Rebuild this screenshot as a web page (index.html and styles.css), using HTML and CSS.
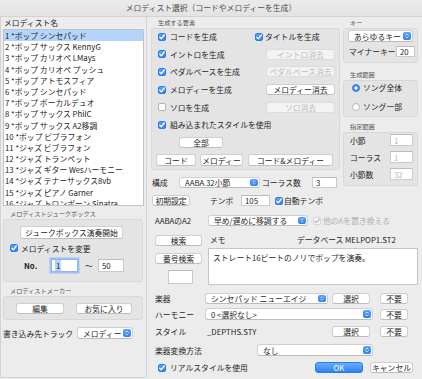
FILE: index.html
```html
<!DOCTYPE html>
<html lang="ja">
<head>
<meta charset="utf-8">
<title>メロディスト選択</title>
<link rel="stylesheet" href="styles.css">
</head>
<body>
<div class="win">
  <div class="title">メロディスト選択（コードやメロディーを生成）</div>
  <div class="main">
    <div class="left">
      <div class="lbl-name">メロディスト名</div>
      <div class="list">
        <div class="li cur">1 *ポップ シンセパッド</div>
        <div class="li">2 *ポップ サックス KennyG</div>
        <div class="li">3 *ポップ カリオペ LMays</div>
        <div class="li">4 *ポップ カリオペ プッシュ</div>
        <div class="li">5 *ポップ アトモスフィア</div>
        <div class="li">6 *ポップ シンセパッド</div>
        <div class="li">7 *ポップ ボーカルデュオ</div>
        <div class="li">8 *ポップ サックス PhilC</div>
        <div class="li">9 *ポップ サックス A2移調</div>
        <div class="li">10 *ポップ ビブラフォン</div>
        <div class="li">11 *ジャズ ビブラフォン</div>
        <div class="li">12 *ジャズ トランペット</div>
        <div class="li">13 *ジャズ ギター Wesハーモニー</div>
        <div class="li">14 *ジャズ テナーサックス8vb</div>
        <div class="li">15 *ジャズ ピアノ Garner</div>
        <div class="li">16 *ジャズ トロンボーン Sinatra</div>
      </div>
      <div class="glabel gl-juke">メロディストジュークボックス</div>
      <div class="grp g-juke">
        <div class="btn b-juke">ジュークボックス演奏開始</div>
        <div class="row r-chg">
          <span class="cb on"><svg viewBox="0 0 8 8"><path d="M1.8 4.2 L3.3 5.9 L6.3 2"/></svg></span>
          <span class="t-chg">メロディストを変更</span>
        </div>
        <div class="row r-no">
          <span class="w-no">No.</span>
          <span class="inp i-no"><span class="hl">1</span></span>
          <span class="tilde">〜</span>
          <span class="inp i-50">50</span>
        </div>
      </div>
      <div class="glabel gl-maker">メロディストメーカー</div>
      <div class="grp g-maker">
        <div class="row r-maker">
          <div class="btn b-edit">編集</div>
          <div class="btn b-fav">お気に入り</div>
        </div>
      </div>
      <div class="row r-track">
        <span class="w-track">書き込み先トラック</span>
        <div class="sel s-track"><span>メロディー</span><i class="step"><svg viewBox="0 0 8 11"><path d="M2.3 4.3 L4 2.6 L5.7 4.3 M2.3 6.7 L4 8.4 L5.7 6.7"/></svg></i></div>
      </div>
    </div>

    <div class="rp">
      <div class="upper">
        <div class="center">
          <div class="glabel gl-top">生成する要素</div>
          <div class="grp g-gen">
            <div class="gen-rows">
              <div class="row r-gen">
                <div class="c1"><span class="cb on"><svg viewBox="0 0 8 8"><path d="M1.8 4.2 L3.3 5.9 L6.3 2"/></svg></span><span class="t-gen">コードを生成</span></div>
                <span class="cb on"><svg viewBox="0 0 8 8"><path d="M1.8 4.2 L3.3 5.9 L6.3 2"/></svg></span><span class="t-title">タイトルを生成</span>
              </div>
              <div class="row r-gen">
                <div class="c1"><span class="cb on"><svg viewBox="0 0 8 8"><path d="M1.8 4.2 L3.3 5.9 L6.3 2"/></svg></span><span class="t-gen">イントロを生成</span></div>
                <div class="btn b-clr dis">イントロ消去</div>
              </div>
              <div class="row r-gen">
                <div class="c1"><span class="cb on"><svg viewBox="0 0 8 8"><path d="M1.8 4.2 L3.3 5.9 L6.3 2"/></svg></span><span class="t-gen">ペダルベースを生成</span></div>
                <div class="btn b-clr dis">ペダルベース消去</div>
              </div>
              <div class="row r-gen">
                <div class="c1"><span class="cb on"><svg viewBox="0 0 8 8"><path d="M1.8 4.2 L3.3 5.9 L6.3 2"/></svg></span><span class="t-gen">メロディーを生成</span></div>
                <div class="btn b-clr">メロディー消去</div>
              </div>
              <div class="row r-gen">
                <div class="c1"><span class="cb"></span><span class="t-gen">ソロを生成</span></div>
                <div class="btn b-clr dis">ソロ消去</div>
              </div>
              <div class="row r-gen">
                <div class="c1 wide"><span class="cb on"><svg viewBox="0 0 8 8"><path d="M1.8 4.2 L3.3 5.9 L6.3 2"/></svg></span><span class="t-gen">組み込まれたスタイルを使用</span></div>
              </div>
            </div>
            <div class="btn b-all">全部</div>
            <div class="row r-three">
              <div class="btn b-code">コード</div>
              <div class="btn b-mel">メロディー</div>
              <div class="btn b-cm">コード&amp;メロディー</div>
            </div>
          </div>
          <div class="row r-kousei">
            <span class="w-kousei">構成</span>
            <div class="sel s-kousei"><span>AABA 32小節</span><i class="step"><svg viewBox="0 0 8 11"><path d="M2.3 4.3 L4 2.6 L5.7 4.3 M2.3 6.7 L4 8.4 L5.7 6.7"/></svg></i></div>
            <span class="w-chorus">コーラス数</span>
            <span class="inp i-chorus">3</span>
          </div>
          <div class="row r-init">
            <div class="btn b-init">初期設定</div>
            <span class="w-tempo">テンポ</span>
            <span class="inp i-tempo">105</span>
            <span class="cb on cb-auto"><svg viewBox="0 0 8 8"><path d="M1.8 4.2 L3.3 5.9 L6.3 2"/></svg></span>
            <span class="t-auto">自動テンポ</span>
          </div>
        </div>

        <div class="rcol">
          <div class="glabel gl-top">キー</div>
          <div class="grp g-key">
            <div class="sel s-key"><span>あらゆるキー</span><i class="step"><svg viewBox="0 0 8 11"><path d="M2.3 4.3 L4 2.6 L5.7 4.3 M2.3 6.7 L4 8.4 L5.7 6.7"/></svg></i></div>
            <div class="row r-minor"><span class="w-minor">マイナーキー</span><span class="inp i-minor">20</span></div>
          </div>
          <div class="glabel gl-range">生成範囲</div>
          <div class="grp g-range">
            <div class="row r-rad r-rad1"><span class="rad on"></span><span class="t-rad">ソング全体</span></div>
            <div class="row r-rad r-rad2"><span class="rad"></span><span class="t-rad">ソング一部</span></div>
          </div>
          <div class="glabel gl-spec">指定範囲</div>
          <div class="grp g-spec">
            <div class="row r-spec"><span class="w-spec">小節</span><span class="inp i-spec">1</span></div>
            <div class="row r-spec"><span class="w-spec">コーラス</span><span class="inp i-spec">1</span></div>
            <div class="row r-spec"><span class="w-spec">小節数</span><span class="inp i-spec">32</span></div>
          </div>
        </div>
      </div>

      <div class="row r-aaba">
        <span class="w-aaba">AABAのA2</span>
        <div class="sel s-aaba"><span>早め/遅めに移調する</span><i class="step"><svg viewBox="0 0 8 11"><path d="M2.3 4.3 L4 2.6 L5.7 4.3 M2.3 6.7 L4 8.4 L5.7 6.7"/></svg></i></div>
        <span class="cb dis-on"><svg viewBox="0 0 8 8"><path d="M1.8 4.2 L3.3 5.9 L6.3 2"/></svg></span>
        <span class="t-other">他のAを置き換える</span>
      </div>

      <div class="lower">
        <div class="lc">
          <div class="btn b-search">検索</div>
          <div class="btn b-num">番号検索</div>
          <span class="inp i-num"></span>
        </div>
        <div class="rc">
          <div class="row r-memo">
            <span class="w-memo">メモ</span>
            <span class="w-db">データベース</span>
            <span class="v-db">MELPOP1.ST2</span>
          </div>
          <div class="memo">ストレート16ビートのノリでポップを演奏。</div>
        </div>
      </div>

      <div class="row r-inst">
        <span class="w-lbl">楽器</span>
        <div class="sel s-inst"><span>シンセパッド ニューエイジ</span><i class="step"><svg viewBox="0 0 8 11"><path d="M2.3 4.3 L4 2.6 L5.7 4.3 M2.3 6.7 L4 8.4 L5.7 6.7"/></svg></i></div>
        <div class="btn b-pick">選択</div>
        <div class="btn b-none">不要</div>
      </div>
      <div class="row r-harm">
        <span class="w-lbl">ハーモニー</span>
        <div class="sel s-harm"><span>0 &lt;選択なし&gt;</span><i class="step"><svg viewBox="0 0 8 11"><path d="M2.3 4.3 L4 2.6 L5.7 4.3 M2.3 6.7 L4 8.4 L5.7 6.7"/></svg></i></div>
        <div class="btn b-none2">不要</div>
      </div>
      <div class="row r-style">
        <span class="w-lbl">スタイル</span>
        <span class="v-style">_DEPTHS.STY</span>
        <div class="btn b-pick b-pick2">選択</div>
        <div class="btn b-none">不要</div>
      </div>
      <div class="row r-conv">
        <span class="w-conv">楽器変換方法</span>
        <div class="sel s-conv"><span>なし</span><i class="step"><svg viewBox="0 0 8 11"><path d="M2.3 4.3 L4 2.6 L5.7 4.3 M2.3 6.7 L4 8.4 L5.7 6.7"/></svg></i></div>
      </div>
      <div class="row r-bottom">
        <span class="cb on cb-real"><svg viewBox="0 0 8 8"><path d="M1.8 4.2 L3.3 5.9 L6.3 2"/></svg></span>
        <span class="t-real">リアルスタイルを使用</span>
        <div class="btn b-ok">OK</div>
        <div class="btn b-cancel">キャンセル</div>
      </div>
    </div>
  </div>
</div>
</body>
</html>
```

FILE: styles.css
```css
* { box-sizing: border-box; }
html, body { margin: 0; padding: 0; }
body {
  font-family: "Noto Sans CJK JP", "Noto Sans", sans-serif;
  font-size: 7.8px;
  color: #1d1d1d;
  background: #ececec;
}
.win {
  width: 422px;
  height: 379px;
  overflow: hidden;
  background: #ececec;
  white-space: nowrap;
}
.title {
  height: 17px;
  line-height: 16px;
  text-align: center;
  color: #4c4c4c;
  background: linear-gradient(#ebebeb, #e3e3e3);
  border-bottom: 1px solid #d2d2d2;
}
.main { display: flex; height: 362px; }

/* generic pieces */
.row { display: flex; align-items: center; }
.glabel {
  height: 10px;
  line-height: 10px;
  font-size: 6.2px;
  color: #555;
}
.grp {
  background: #e4e4e4;
  border: 1px solid #d8d8d8;
  border-radius: 3px;
}
.btn {
  display: flex;
  align-items: center;
  justify-content: center;
  height: 11px;
  background: #fff;
  border: 1px solid #cfcfcf;
  border-bottom-color: #bdbdbd;
  border-radius: 3px;
  color: #222;
  flex: none;
}
.btn.dis { background: #f3f3f3; color: #bcbcbc; border-color: #dcdcdc; }
.cb {
  flex: none;
  width: 8px;
  height: 8px;
  border-radius: 2px;
  background: #fff;
  border: 1px solid #b4b4b4;
  display: flex;
}
.cb svg { width: 8px; height: 8px; margin: -1px; }
.cb path { fill: none; stroke: #fff; stroke-width: 1.3; stroke-linecap: round; stroke-linejoin: round; }
.cb.on { background: linear-gradient(#5aa2fb, #2f80f2); border-color: #2f7be8; }
.cb.dis-on { background: #fff; border-color: #d6d6d6; }
.cb.dis-on path { stroke: #b8b8b8; }
.rad {
  flex: none;
  width: 8px;
  height: 8px;
  border-radius: 50%;
  background: #fff;
  border: 1px solid #b4b4b4;
}
.rad.on {
  background: radial-gradient(circle, #fff 0 1.4px, #3d88f5 1.8px);
  border-color: #2f7be8;
}
.inp {
  flex: none;
  display: flex;
  align-items: center;
  background: #fff;
  border: 1px solid #cacaca;
  border-top-color: #bcbcbc;
  padding-left: 3px;
  color: #1d1d1d;
}
.sel {
  flex: none;
  display: flex;
  align-items: center;
  position: relative;
  background: #fff;
  border: 1px solid #d0d0d0;
  border-bottom-color: #bcbcbc;
  border-radius: 3px;
  padding-left: 5px;
}
.sel > span { flex: 1; overflow: hidden; }
.step {
  flex: none;
  width: 8px;
  height: calc(100% - 2px);
  margin-right: 1px;
  border-radius: 2px;
  background: linear-gradient(#5aa2fb, #2f80f2);
  display: flex;
}
.step svg { width: 8px; height: 100%; }
.step path { fill: none; stroke: #fff; stroke-width: 1; stroke-linecap: round; stroke-linejoin: round; }

/* left panel */
.left {
  flex: none;
  width: 147px;
  height: 361px;
  border: 1px solid #d3d3d3;
  border-top: none;
  padding: 0 2px;
}
.lbl-name { height: 12px; line-height: 11px; padding-left: 1px; }
.list {
  height: 177px;
  background: #fff;
  border: 1px solid #c3c3c3;
  overflow: hidden;
}
.li { height: 11.2px; line-height: 11.2px; padding-left: 1px; }
.li.cur { background: #b5d4fc; }
.gl-juke { margin-top: 3px; padding-left: 7px; }
.g-juke { height: 63px; width: 140px; }
.b-juke { margin: 6px 0 0 16px; width: 103px; height: 13px; }
.r-chg { height: 12px; margin-top: 3px; }
.r-chg .cb { margin-left: 6px; }
.t-chg { margin-left: 3px; }
.r-no { height: 13px; margin-top: 5px; }
.w-no { margin-left: 20px; width: 27px; font-weight: bold; }
.i-no { width: 27px; height: 13px; border-color: #8fb7ef; box-shadow: 0 0 0 1.5px #9cc1f4; }
.hl { background: #b5d4fc; padding: 0 1px; }
.tilde { margin-left: 7px; width: 13px; }
.i-50 { width: 26px; height: 13px; }
.gl-maker { margin-top: 4px; padding-left: 7px; }
.g-maker { height: 24px; width: 140px; }
.r-maker { margin-top: 6px; }
.b-edit { margin-left: 12px; width: 48px; }
.b-fav { margin-left: 12px; width: 56px; }
.r-track { margin-top: 7px; height: 12px; }
.w-track { width: 74px; }
.s-track { width: 56px; height: 12px; }

/* right part */
.rp { flex: none; width: 275px; }
.upper { display: flex; height: 189px; }
.center { flex: none; width: 189px; margin-left: 4px; }
.gl-top { margin-top: 1px; padding-left: 7px; }
.g-gen { height: 142px; }
.gen-rows { margin-top: -1px; }
.r-gen { height: 17.6px; }
.c1 { width: 103px; display: flex; align-items: center; }
.c1 .cb { margin-left: 6px; }
.t-gen { margin-left: 4px; }
.t-title { margin-left: 2px; }
.b-clr { margin-left: 11px; width: 69px; }
.b-all { margin: 3.5px 0 0 27px; width: 44px; }
.r-three { margin-top: 6px; }
.r-three .btn { height: 12px; }
.b-code { margin-left: 4px; width: 40px; }
.b-mel { margin-left: 4px; width: 43px; }
.b-cm { margin-left: 5px; width: 85px; }
.r-kousei { margin-top: 7px; height: 11px; }
.w-kousei { width: 28px; padding-left: 1px; }
.s-kousei { width: 81px; height: 11px; }
.w-chorus { width: 52px; padding-left: 2px; }
.i-chorus { width: 25px; height: 11px; }
.r-init { margin-top: 7px; height: 11px; }
.b-init { margin-left: 1px; width: 38px; }
.w-tempo { margin-left: 20px; width: 31px; }
.i-tempo { width: 29px; height: 11px; }
.cb-auto { margin-left: 5px; }
.t-auto { margin-left: 1px; }

.rcol { flex: none; width: 75px; margin-left: 3px; }
.g-key { height: 35px; }
.s-key { margin: 1px 0 0 4px; width: 65px; height: 12px; }
.r-minor { margin-top: 4px; height: 11px; }
.w-minor { margin-left: 5px; width: 47px; }
.i-minor { width: 19px; height: 11px; }
.gl-range { margin-top: 7px; padding-left: 7px; }
.g-range { height: 37px; }
.r-rad { height: 13px; }
.r-rad1 { margin-top: 0; }
.r-rad2 { margin-top: 6px; }
.r-rad .rad { margin-left: 8px; }
.t-rad { margin-left: 3px; }
.gl-spec { margin-top: 5px; padding-left: 7px; }
.g-spec { height: 54px; }
.r-spec { height: 12px; margin-top: 5px; }
.r-spec:first-child { margin-top: 1px; }
.w-spec { margin-left: 6px; width: 40px; }
.i-spec { width: 23px; height: 12px; color: #b4b4b4; }

.r-aaba { margin-top: 9px; height: 11px; }
.w-aaba { margin-left: 8px; width: 53px; }
.s-aaba { width: 100px; height: 11px; }
.r-aaba .cb { margin-left: 5px; }
.t-other { margin-left: 2px; color: #b0b0b0; }

.lower { display: flex; height: 59px; }
.lc { flex: none; width: 47px; margin-left: 8px; }
.b-search { margin-top: 9px; width: 47px; }
.b-num { margin-top: 7px; width: 47px; }
.i-num { margin: 6px 0 0 13px; width: 25px; height: 14px; }
.rc { flex: none; width: 210px; margin-left: 6px; }
.r-memo { margin-top: 8px; height: 10px; }
.w-memo { margin-left: 2px; width: 87px; }
.w-db { width: 48px; }
.memo {
  margin-top: 4px;
  height: 37px;
  background: #fff;
  border: 1px solid #c6c6c6;
  padding: 3px 0 0 4px;
}

.r-inst { margin-top: 8px; height: 11px; }
.w-lbl { margin-left: 8px; width: 50px; }
.s-inst { width: 123px; height: 11px; }
.b-pick { margin-left: 4px; width: 38px; }
.b-none { margin-left: 10px; width: 28px; }
.r-harm { margin-top: 4px; height: 12px; }
.s-harm { width: 168px; height: 12px; }
.b-none2 { margin-left: 7px; width: 28px; }
.r-style { margin-top: 6px; height: 11px; }
.v-style { width: 127px; padding-left: 2px; }
.b-pick2 { margin-left: 0; }
.r-conv { margin-top: 7px; height: 12px; }
.w-conv { margin-left: 8px; width: 102px; }
.s-conv { width: 116px; height: 12px; }
.r-bottom { margin-top: 6px; height: 11px; }
.cb-real { margin-left: 11px; }
.t-real { margin-left: 4px; flex: 1; }
.b-ok {
  width: 48px;
  color: #fff;
  background: linear-gradient(#69aefc, #2f80f2);
  border-color: #2e7be6;
}
.b-cancel { margin-left: 7px; margin-right: 9px; width: 43px; }
```
